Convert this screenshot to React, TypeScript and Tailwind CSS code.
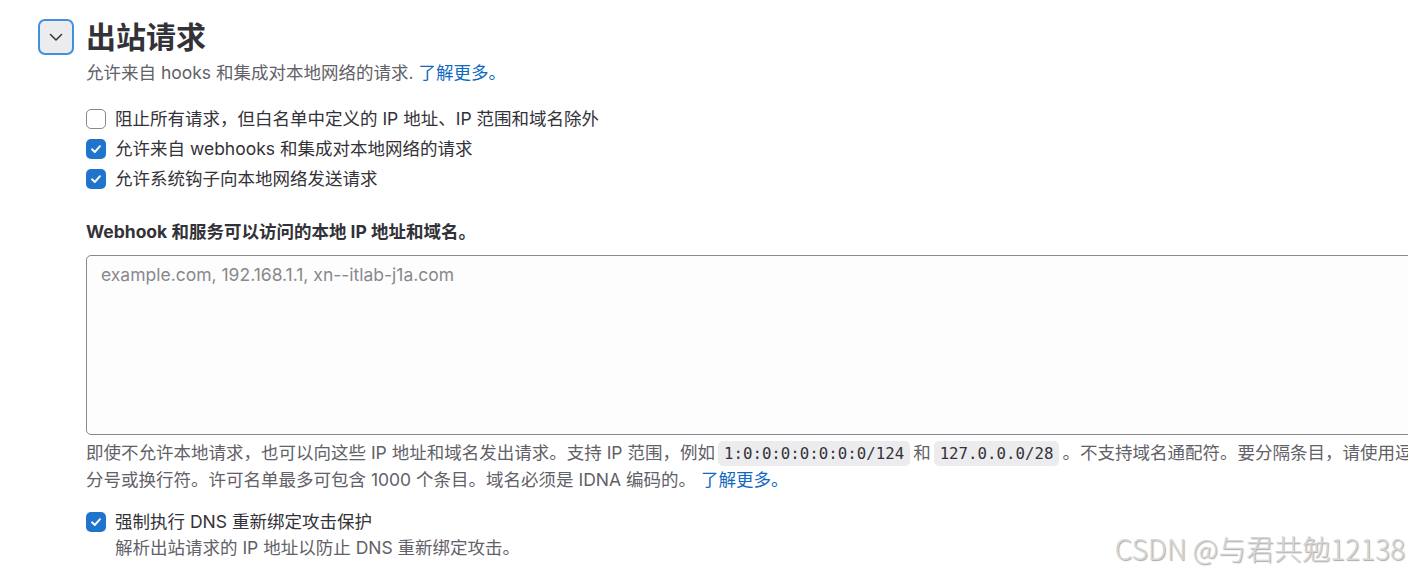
import React from "react";

const font = { fontFamily: 'Inter, "Noto Sans CJK SC", sans-serif' };

function Check({ checked }: { checked: boolean }) {
  return checked ? (
    <span className="flex h-5 w-5 shrink-0 items-center justify-center rounded-[5px] bg-[#1f75cb]">
      <svg width="12" height="12" viewBox="0 0 12 12" fill="none">
        <path d="M2 6.3 L4.8 9 L10 3.2" stroke="white" strokeWidth="1.9" strokeLinecap="round" strokeLinejoin="round" />
      </svg>
    </span>
  ) : (
    <span className="h-5 w-5 shrink-0 rounded-[5px] border border-[#89888d] bg-white" />
  );
}

function Row({ checked, children }: { checked: boolean; children: React.ReactNode }) {
  return (
    <div className="flex h-[30px] items-center gap-[9px] text-[17.5px] text-[#333238]">
      <Check checked={checked} />
      <span>{children}</span>
    </div>
  );
}

function Code({ children }: { children: React.ReactNode }) {
  return (
    <code
      className="mx-[3px] rounded-[5px] bg-[#ececef] px-[6px] py-[3px] text-[15.75px] text-[#333238]"
      style={{ fontFamily: '"DejaVu Sans Mono", "Liberation Mono", monospace' }}
    >
      {children}
    </code>
  );
}

export default function App() {
  return (
    <div className="relative h-[575px] w-[1408px] overflow-hidden bg-white" style={font}>
      <div className="flex gap-3 pl-[38px] pt-[19px]">
        <button className="flex h-9 w-9 shrink-0 items-center justify-center rounded-[7px] border-2 border-[#428fdc] bg-[#ececef]">
          <svg width="16" height="16" viewBox="0 0 16 16" fill="none">
            <path d="M2.5 5.5 L8 11 L13.5 5.5" stroke="#333238" strokeWidth="1.5" strokeLinecap="round" strokeLinejoin="round" />
          </svg>
        </button>
        <div className="w-[1375px] shrink-0">
          <h2 className="text-[30px] font-bold leading-9 text-[#333238]">出站请求</h2>
          <p className="mt-[5px] text-[17.5px] leading-[26px] text-[#626168]">
            允许来自 hooks 和集成对本地网络的请求. <span className="text-[#1068bf]">了解更多。</span>
          </p>
          <div className="mt-[18px]">
            <Row checked={false}>阻止所有请求，但白名单中定义的 IP 地址、IP 范围和域名除外</Row>
            <Row checked>允许来自 webhooks 和集成对本地网络的请求</Row>
            <Row checked>允许系统钩子向本地网络发送请求</Row>
          </div>
          <div className="mt-[25px] text-[17.5px] font-bold leading-[26px] text-[#333238]">
            Webhook 和服务可以访问的本地 IP 地址和域名。
          </div>
          <textarea
            className="mt-[10px] block h-[180px] w-full resize-none rounded-[5px] border border-[#89888d] bg-[#fdfdfd] px-[14px] py-[6px] text-[17.5px] leading-[26px] text-[#333238] outline-none placeholder:text-[#89888d]"
            placeholder="example.com, 192.168.1.1, xn--itlab-j1a.com"
            style={font}
          />
          <p className="mt-[5px] text-[17.5px] leading-[26px] text-[#626168]">
            即使不允许本地请求，也可以向这些 IP 地址和域名发出请求。支持 IP 范围，例如
            <Code>1:0:0:0:0:0:0:0/124</Code>和<Code>127.0.0.0/28</Code>。不支持域名通配符。要分隔条目，请使用逗号、分号或换行符。许可名单最多可包含 1000 个条目。域名必须是 IDNA 编码的。{" "}
            <span className="text-[#1068bf]">了解更多。</span>
          </p>
          <div className="mt-[16px] flex h-[26px] items-center gap-[9px] text-[17.5px] text-[#333238]">
            <Check checked />
            <span>强制执行 DNS 重新绑定攻击保护</span>
          </div>
          <p className="pl-[29px] text-[17.5px] leading-[26px] text-[#626168]">
            解析出站请求的 IP 地址以防止 DNS 重新绑定攻击。
          </p>
        </div>
      </div>
      <div
        className="absolute right-[3px] top-[530px] text-[28px] font-light leading-9 text-[#d6d6d6]"
        style={{ fontFamily: '"Noto Sans CJK SC", sans-serif', textShadow: "1px 1px 1px #a8a8a8" }}
      >
        CSDN @与君共勉12138
      </div>
    </div>
  );
}
